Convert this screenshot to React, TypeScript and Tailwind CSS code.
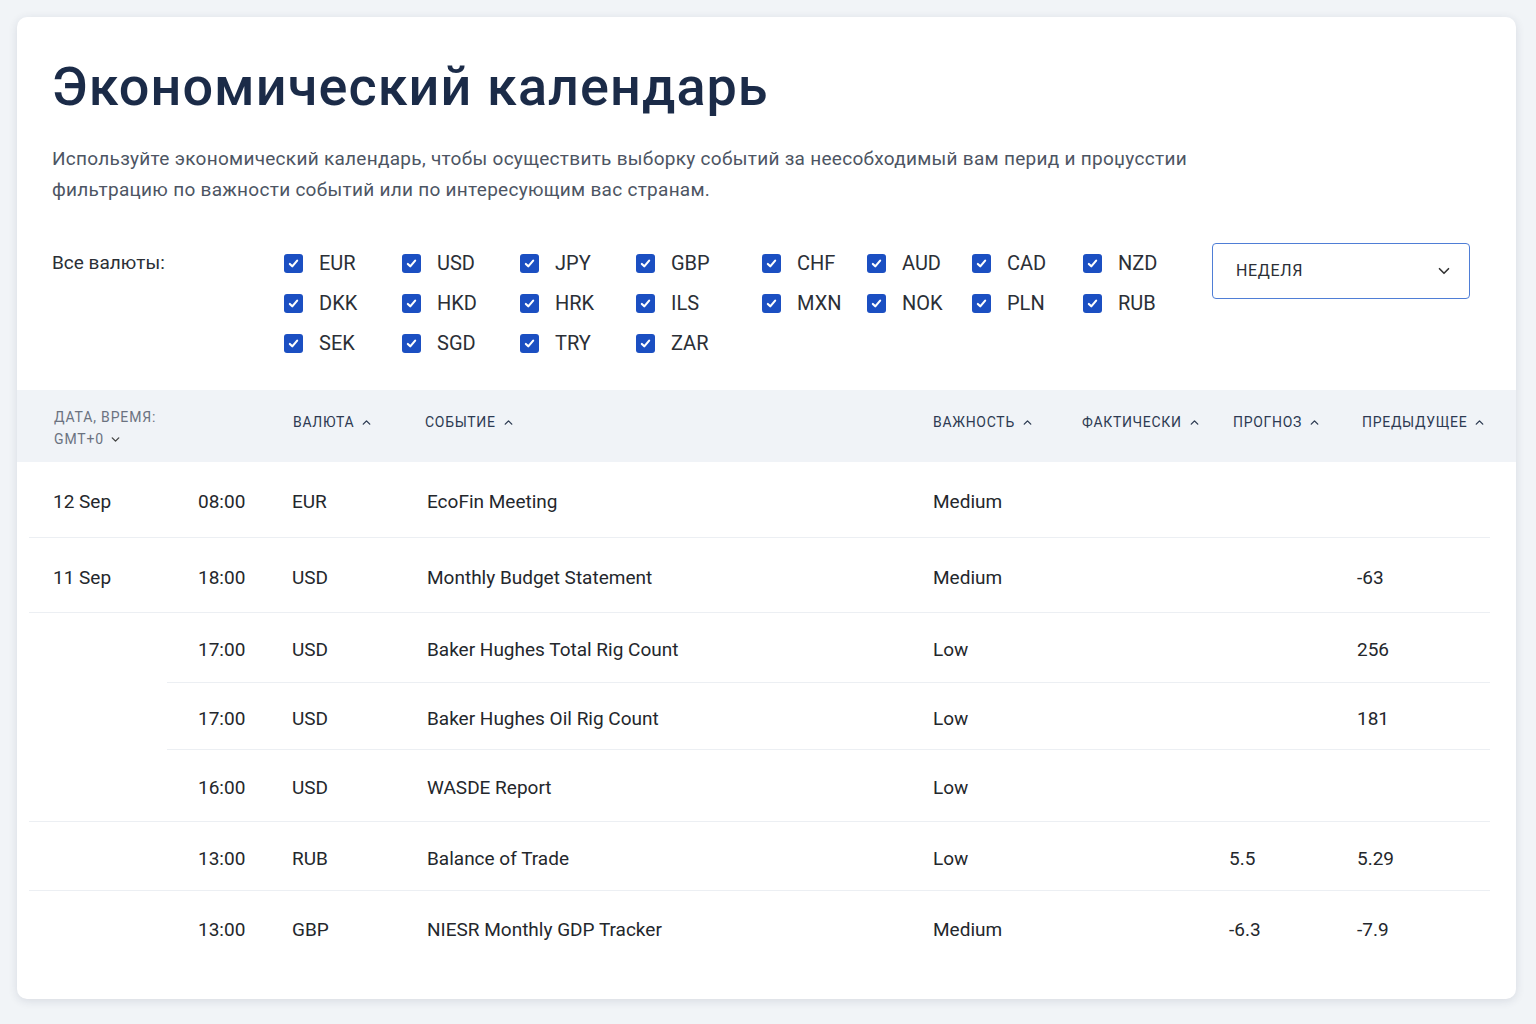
import React from 'react';
import { ChevronDown, ChevronUp } from 'lucide-react';

const currencies = [
  ['EUR', 'USD', 'JPY', 'GBP', 'CHF', 'AUD', 'CAD', 'NZD'],
  ['DKK', 'HKD', 'HRK', 'ILS', 'MXN', 'NOK', 'PLN', 'RUB'],
  ['SEK', 'SGD', 'TRY', 'ZAR'],
];

type Row = {
  date?: string;
  time: string;
  cur: string;
  event: string;
  imp: string;
  actual?: string;
  forecast?: string;
  prev?: string;
  h: string;
  line?: 'full' | 'indent' | 'none';
};

const rows: Row[] = [
  { date: '12 Sep', time: '08:00', cur: 'EUR', event: 'EcoFin Meeting', imp: 'Medium', h: 'h-[75px]', line: 'full' },
  { date: '11 Sep', time: '18:00', cur: 'USD', event: 'Monthly Budget Statement', imp: 'Medium', prev: '-63', h: 'h-[74px]', line: 'full' },
  { time: '17:00', cur: 'USD', event: 'Baker Hughes Total Rig Count', imp: 'Low', prev: '256', h: 'h-[69px]', line: 'indent' },
  { time: '17:00', cur: 'USD', event: 'Baker Hughes Oil Rig Count', imp: 'Low', prev: '181', h: 'h-[66px]', line: 'indent' },
  { time: '16:00', cur: 'USD', event: 'WASDE Report', imp: 'Low', h: 'h-[71px]', line: 'full' },
  { time: '13:00', cur: 'RUB', event: 'Balance of Trade', imp: 'Low', forecast: '5.5', prev: '5.29', h: 'h-[68px]', line: 'full' },
  { time: '13:00', cur: 'GBP', event: 'NIESR Monthly GDP Tracker', imp: 'Medium', forecast: '-6.3', prev: '-7.9', h: 'h-[72px]', line: 'none' },
];

function Check({ label }: { label: string }) {
  return (
    <div className="flex h-[40px] items-center">
      <span className="flex h-[19px] w-[19px] items-center justify-center rounded-[3px] bg-[#1b4fc2]">
        <svg viewBox="0 0 16 16" className="h-[13px] w-[13px]" fill="none" stroke="white" strokeWidth="2.6" strokeLinecap="round" strokeLinejoin="round">
          <path d="M3.5 8.5l3 3 6-7" />
        </svg>
      </span>
      <span className="ml-[16px] text-[20px] text-[#2b2f36]">{label}</span>
    </div>
  );
}

function HeadCell({ label, className }: { label: string; className: string }) {
  return (
    <div className={`flex items-center gap-[6px] text-[14px] tracking-[0.05em] text-[#2d3a52] ${className}`}>
      <span>{label}</span>
      <ChevronUp size={13} strokeWidth={2.5} />
    </div>
  );
}

export default function App() {
  return (
    <div className="min-h-screen bg-[#f1f4f7] p-[17px] font-['Roboto','Liberation_Sans',sans-serif]">
      <div className="w-[1499px] overflow-hidden rounded-[10px] bg-white shadow-[0_2px_10px_rgba(30,45,70,0.12)]">
        <div className="px-[35px] pt-[40px]">
          <h1 className="text-[54px] font-medium leading-[60px] tracking-[0.02em] text-[#1b2b48]">Экономический календарь</h1>
          <p className="mt-[26px] max-w-[1180px] text-[19px] leading-[31px] tracking-[0.015em] text-[#4d5563]">
            Используйте экономический календарь, чтобы осуществить выборку событий за неесобходимый вам перид и проџусстии фильтрацию по важности событий или по интересующим вас странам.
          </p>
          <div className="mt-[38px] flex items-start pb-[27px]">
            <div className="flex h-[40px] w-[232px] items-center text-[19px] text-[#2b2f36]">Все валюты:</div>
            <div className="grid grid-cols-[118px_118px_116px_126px_105px_105px_111px_129px]">
              {currencies.flat().map((c) => (
                <Check key={c} label={c} />
              ))}
            </div>
            <div className="flex h-[56px] w-[258px] items-center justify-between rounded-[4px] border border-[#4f7ed6] pl-[23px] pr-[16px] text-[16px] tracking-[0.04em] text-[#2b2f36]">
              <span>НЕДЕЛЯ</span>
              <ChevronDown size={18} strokeWidth={2.2} className="text-[#333]" />
            </div>
          </div>
        </div>

        <div className="flex h-[72px] items-start bg-[#f0f3f7] pt-[16px]">
          <div className="w-[276px] pl-[37px] text-[14px] leading-[22px] tracking-[0.06em] text-[#6b7280]">
            <div>ДАТА, ВРЕМЯ:</div>
            <div className="flex items-center gap-[5px]">
              GMT+0 <ChevronDown size={13} strokeWidth={2.5} className="text-[#444]" />
            </div>
          </div>
          <div className="flex h-[22px] items-center pt-[10px]">
            <HeadCell label="ВАЛЮТА" className="w-[132px]" />
            <HeadCell label="СОБЫТИЕ" className="w-[508px]" />
            <HeadCell label="ВАЖНОСТЬ" className="w-[149px]" />
            <HeadCell label="ФАКТИЧЕСКИ" className="w-[151px]" />
            <HeadCell label="ПРОГНОЗ" className="w-[129px]" />
            <HeadCell label="ПРЕДЫДУЩЕЕ" className="" />
          </div>
        </div>

        <div className="ml-[12px] mr-[26px] pb-[36px]">
          {rows.map((r, i) => (
            <div key={i}>
              <div className={`flex items-center pt-[6px] text-[19px] text-[#24272c] ${r.h}`}>
                <div className="w-[169px] pl-[24px]">{r.date}</div>
                <div className="w-[94px]">{r.time}</div>
                <div className="w-[135px]">{r.cur}</div>
                <div className="w-[506px]">{r.event}</div>
                <div className="w-[149px]">{r.imp}</div>
                <div className="w-[147px]">{r.actual}</div>
                <div className="w-[128px]">{r.forecast}</div>
                <div>{r.prev}</div>
              </div>
              {r.line === 'full' && <div className="h-px bg-[#eceff3]" />}
              {r.line === 'indent' && <div className="ml-[138px] h-px bg-[#eceff3]" />}
            </div>
          ))}
        </div>
      </div>
    </div>
  );
}
